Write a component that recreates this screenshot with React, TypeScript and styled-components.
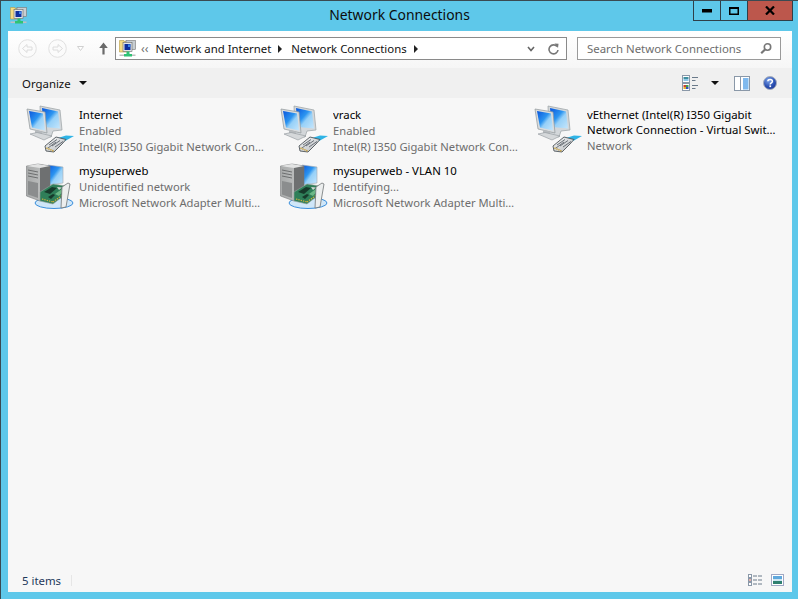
import React from "react";
import styled, { createGlobalStyle } from "styled-components";

const Global = createGlobalStyle`
  html, body { margin: 0; padding: 0; width: 798px; height: 599px; overflow: hidden; }
  #root { width: 798px; height: 599px; }
  * { box-sizing: border-box; }
`;

const Window = styled.div`
  width: 798px; height: 599px; display: flex; flex-direction: column;
  background: #5ec8ea; border-top: 1px solid #3a4a52; border-left: 1px solid #3a4a52;
  font-family: "Noto Sans", "Open Sans", sans-serif; font-size: 11.4px; color: #000;
`;
const TitleBar = styled.div`
  height: 30px; flex: none; display: grid; grid-template-columns: 1fr auto 1fr; align-items: start;
`;
const AppIconSlot = styled.div`
  padding: 6px 0 0 9px; display: flex;
`;
const Title = styled.div`
  font-size: 13.9px; line-height: 20px; padding-top: 4px; color: #0c0c0c;
`;
const Controls = styled.div`
  display: flex; justify-content: flex-end; padding-right: 5px;
`;
const Ctl = styled.div<{ $w: number; $close?: boolean }>`
  width: ${(p) => p.$w}px; height: 20px; display: flex; align-items: center; justify-content: center;
  background: ${(p) => (p.$close ? "#bc574c" : "transparent")};
  border: 1px solid #2f3f48; border-top: none; margin-left: -1px;
`;
const Client = styled.div`
  flex: 1; margin: 0 6px 7px 7px; display: flex; flex-direction: column; background: #f7f7f7;
`;
const NavBar = styled.div`
  height: 37px; flex: none; display: flex; align-items: flex-start; padding: 6px 0 0 10px;
  background: linear-gradient(#ffffff, #f6f6f6);
`;
const NavIcons = styled.div`
  width: 97px; height: 23px; flex: none; display: flex; align-items: center;
`;
const Spacer = styled.span<{ $w: number }>`
  width: ${(p) => p.$w}px; flex: none;
`;
const AddressBox = styled.div`
  width: 452px; height: 23px; flex: none; border: 1px solid #8a8a8a; background: #fff;
  display: flex; align-items: center; color: #111; padding-left: 3px;
`;
const Crumb = styled.span`
  line-height: 20px; white-space: nowrap;
`;
const Chevrons = styled.span`
  color: #6f6f6f; margin: 0 7px 0 5px; font-size: 12px; line-height: 18px;
`;
const Sep = styled.span`
  width: 0; height: 0; border-left: 4px solid #222; border-top: 4px solid transparent; border-bottom: 4px solid transparent;
  margin: 0 9px 0 7px;
`;
const AddrEnd = styled.div`
  margin-left: auto; display: flex; align-items: center; gap: 13px; padding-right: 7px;
`;
const SearchBox = styled.div`
  width: 204px; height: 23px; flex: none; margin-left: 10px; border: 1px solid #9a9a9a; background: #fff;
  display: flex; align-items: center; justify-content: space-between; padding: 0 8px 0 9px; color: #6d6d6d; white-space: nowrap;
`;
const ToolBar = styled.div`
  height: 30px; flex: none; background: #f0f0f0; display: flex; align-items: center; padding: 0 15px 0 14px;
`;
const Organize = styled.span`
  color: #111; line-height: 18px; padding-top: 1px;
`;
const Caret = styled.span<{ $gap: number }>`
  width: 0; height: 0; border-top: 4px solid #111; border-left: 4px solid transparent; border-right: 4px solid transparent;
  margin-left: ${(p) => p.$gap}px;
`;
const ToolRight = styled.div`
  margin-left: auto; display: flex; align-items: center;
`;
const Items = styled.div`
  flex: 1; display: grid; grid-template-columns: repeat(3, 254px); grid-auto-rows: 56px; align-content: start; padding: 5px 0 0 16px;
`;
const Item = styled.div`
  display: flex; min-width: 0;
`;
const IconSlot = styled.div`
  width: 55px; flex: none; padding: 2px 0 0 2px; display: flex;
`;
const ItemText = styled.div<{ $wide?: boolean }>`
  min-width: 0; width: ${(p) => (p.$wide ? 192 : 187)}px; padding-top: 4px; line-height: 16px;
`;
const Name = styled.div<{ $tight?: boolean }>`
  color: #000; line-height: ${(p) => (p.$tight ? "15px" : "16px")};
  overflow: hidden; text-overflow: ellipsis; white-space: nowrap;
`;
const Sub = styled.div<{ $gap?: boolean }>`
  color: #6d6d6d; font-size: 11.2px; overflow: hidden; text-overflow: ellipsis; white-space: nowrap;
  margin-top: ${(p) => (p.$gap ? 1 : 0)}px;
`;
const StatusBar = styled.div`
  height: 24px; flex: none; display: flex; align-items: center; padding: 0 8px 0 14px; color: #1e395b;
`;
const StatusSep = styled.span`
  width: 1px; height: 11px; background: #e6e6e6; margin-left: 10px;
`;
const StatusRight = styled.div`
  margin-left: auto; display: flex; align-items: center; gap: 8px;
`;

const Gradients = () => (
  <svg width="0" height="0" style={{ display: "block" }} aria-hidden>
    <defs>
      <linearGradient id="scr" x1="0" y1="0" x2="1" y2="1">
        <stop offset="0" stopColor="#0a56dc" />
        <stop offset="0.42" stopColor="#2b94f0" />
        <stop offset="0.58" stopColor="#96d0f8" />
        <stop offset="1" stopColor="#c6e6fb" />
      </linearGradient>
      <linearGradient id="tower" x1="0" y1="0" x2="1" y2="0">
        <stop offset="0" stopColor="#a8aaaa" />
        <stop offset="1" stopColor="#c6c8c8" />
      </linearGradient>
      <linearGradient id="body" x1="0" y1="0" x2="1" y2="1">
        <stop offset="0" stopColor="#f7f8f9" />
        <stop offset="1" stopColor="#b4b8bc" />
      </linearGradient>
      <radialGradient id="help" cx="0.4" cy="0.3" r="0.8">
        <stop offset="0" stopColor="#7ea6ea" />
        <stop offset="0.6" stopColor="#2a4fb2" />
        <stop offset="1" stopColor="#1c3690" />
      </radialGradient>
    </defs>
  </svg>
);

const LanIcon = () => (
  <svg width="50" height="50" viewBox="1 0 50 50">
    <path d="M15 1 L35 5 L37 25 L28 26 L26 32 L16 30 Z" fill="#d3d7da" stroke="#9aa0a4" strokeWidth="0.7" />
    <path d="M17 3 L33 6.5 L35 23.5 L19 22 Z" fill="url(#scr)" />
    <path d="M2 4 L20 7 L22 28 L5 24 Z" fill="#d9dcde" stroke="#8f969a" strokeWidth="0.7" />
    <path d="M4 6 L18 8.5 L20 25.5 L7 22.5 Z" fill="url(#scr)" />
    <path d="M10 25 L17 26.5 L17 30 L10 29 Z" fill="#b7bbbe" />
    <path d="M5 29 L12 27.5 L27 31 L19 35 Z" fill="#d5d8da" stroke="#8f969a" strokeWidth="0.6" />
    <path d="M33 33 L41 30.5 L49 31 L41 35.5 L37 37 Z" fill="#2fb4e6" />
    <path d="M20 41 L31 32 L41 34.5 L37 39 L29 47 L21 46 Z" fill="url(#body)" stroke="#4f565a" strokeWidth="0.9" />
    <path d="M24 40 L32 34.5 M27 41 L35 35.5 M30 42 L38 36.5 M23 43 L31 37" stroke="#5d646c" strokeWidth="0.9" />
    <path d="M21.5 43 L28.5 46" stroke="#c49a2a" strokeWidth="1.5" strokeDasharray="1.2 0.9" />
  </svg>
);

const AdapterIcon = () => (
  <svg width="50" height="50" viewBox="0 0 50 50">
    <path d="M22 4 L37 6 L37 22 L22 24 Z" fill="url(#scr)" stroke="#a5aaae" strokeWidth="0.6" />
    <ellipse cx="28" cy="42" rx="19" ry="5.5" fill="#cfe6f8" stroke="#3b8fdc" strokeWidth="1" />
    <path d="M0.5 5 L12 3 L24 5 L24 34 L14 40 L0.5 35 Z" fill="url(#tower)" stroke="#7a7c7d" strokeWidth="0.6" />
    <path d="M12 3 L24 5 L24 34 L14 40 L14 7 Z" fill="#6e7071" />
    <path d="M0.5 5 L12 3 L24 5 L14 7 Z" fill="#e2e3e3" />
    <path d="M2 9 L12 11 M2 12 L12 14 M2 15 L12 17" stroke="#6d6f70" strokeWidth="1" />
    <path d="M2 20 L12 22 L12 37 L2 33.5 Z" fill="#8b8d8e" />
    <path d="M14 31 L27 23 L40 25 L40 33 L27 43 L14 40 Z" fill="#2f7f59" stroke="#98a2a0" strokeWidth="0.6" />
    <path d="M18 31 L26 26 L31 27 L24 33 Z" fill="#173a2b" />
    <path d="M29 33 L36 28 L38 29 L33 35 Z" fill="#6cb886" />
    <path d="M22 36 L27 33 L29 34 L25 38 Z" fill="#173a2b" />
    <path d="M31 26 L36 26.5 L33 29 Z" fill="#cfd6d2" />
    <path d="M16 38 L27 41 M27 41 L38 33" stroke="#d0b040" strokeWidth="1.2" strokeDasharray="1.4 1" />
    <path d="M36 26 L42 22 L44 23 L40 46 L35 47 Z" fill="#eceeee" stroke="#6e7375" strokeWidth="0.8" />
  </svg>
);

const FolderNetIcon = () => (
  <svg width="17" height="17" viewBox="0 0 17 17">
    <path d="M0.5 0.5 H5 V1.5 H9 V12 H0.5 Z" fill="#f6dc83" stroke="#b79a45" strokeWidth="0.6" />
    <rect x="7" y="0.5" width="9.5" height="9" fill="#c8ced2" stroke="#777" strokeWidth="0.6" />
    <rect x="4" y="2.5" width="9" height="9" fill="#e3e6e8" stroke="#666" strokeWidth="0.6" />
    <rect x="5.5" y="4" width="6" height="6" fill="#0f2f9e" />
    <rect x="9" y="4.5" width="2.5" height="2.5" fill="#3f87e8" />
    <rect x="7.5" y="11.5" width="3" height="3" fill="#2fc274" />
    <rect x="5" y="14" width="8" height="2.5" fill="#2fc274" />
    <rect x="0.5" y="14.5" width="4.5" height="1.5" fill="#bfbfbf" />
    <rect x="13" y="14.5" width="3.5" height="1.5" fill="#bfbfbf" />
  </svg>
);

const RoundArrow = ({ dir }: { dir: "l" | "r" }) => (
  <svg width="19" height="19" viewBox="0 0 19 19">
    <circle cx="9.5" cy="9.5" r="8.8" fill="#fbfbfb" stroke="#e0e0e0" strokeWidth="1" />
    <path
      d={dir === "l" ? "M4.5 9.5 L9 5.5 V8 H14 V11 H9 V13.5 Z" : "M14.5 9.5 L10 5.5 V8 H5 V11 H10 V13.5 Z"}
      fill="#fbfbfb"
      stroke="#dcdcdc"
      strokeWidth="1"
    />
  </svg>
);

type Entry = { k: string; lines: string[]; sub: string; dev?: string };
const items: Entry[] = [
  { k: "lan", lines: ["Internet"], sub: "Enabled", dev: "Intel(R) I350 Gigabit Network Connection" },
  { k: "lan", lines: ["vrack"], sub: "Enabled", dev: "Intel(R) I350 Gigabit Network Connection" },
  { k: "lan", lines: ["vEthernet (Intel(R) I350 Gigabit", "Network Connection - Virtual Switch)"], sub: "Network" },
  { k: "adp", lines: ["mysuperweb"], sub: "Unidentified network", dev: "Microsoft Network Adapter Multiplexor" },
  { k: "adp", lines: ["mysuperweb - VLAN 10"], sub: "Identifying...", dev: "Microsoft Network Adapter Multiplexor" },
];

export default function App() {
  return (
    <Window>
      <Global />
      <Gradients />
      <TitleBar>
        <AppIconSlot>
          <FolderNetIcon />
        </AppIconSlot>
        <Title>Network Connections</Title>
        <Controls>
          <Ctl $w={28}>
            <svg width="10" height="4" viewBox="0 0 10 4"><rect y="0" width="10" height="3.5" fill="#000" /></svg>
          </Ctl>
          <Ctl $w={28}>
            <svg width="10" height="8" viewBox="0 0 10 8"><path d="M0.75 1 H9.25 V7.25 H0.75 Z" fill="none" stroke="#000" strokeWidth="1.5" /><rect width="10" height="2" fill="#000" /></svg>
          </Ctl>
          <Ctl $w={46} $close>
            <svg width="10" height="9" viewBox="0 0 10 9"><path d="M1 0.5 L9 8.5 M9 0.5 L1 8.5" stroke="#000" strokeWidth="2.2" /></svg>
          </Ctl>
        </Controls>
      </TitleBar>
      <Client>
        <NavBar>
          <NavIcons>
            <RoundArrow dir="l" />
            <Spacer $w={11} />
            <RoundArrow dir="r" />
            <Spacer $w={10} />
            <svg width="7" height="5" viewBox="0 0 7 5"><path d="M0.5 0.5 H6.5 L3.5 4.5 Z" fill="#fff" stroke="#d0d0d0" /></svg>
            <Spacer $w={15} />
            <svg width="9" height="13" viewBox="0 0 9 13"><path d="M4.5 0.5 L8.8 6 H5.6 V12.5 H3.4 V6 H0.2 Z" fill="#6a6a6a" /></svg>
          </NavIcons>
          <AddressBox>
            <FolderNetIcon />
            <Chevrons>‹‹</Chevrons>
            <Crumb>Network and Internet</Crumb>
            <Sep />
            <Crumb>Network Connections</Crumb>
            <Sep />
            <AddrEnd>
              <svg width="8" height="6" viewBox="0 0 8 6"><path d="M1 1 L4 4.5 L7 1" fill="none" stroke="#666" strokeWidth="1.6" /></svg>
              <svg width="11" height="12" viewBox="0 0 11 12"><path d="M9 3.5 A4.5 4.5 0 1 0 10 7" fill="none" stroke="#777" strokeWidth="1.6" /><path d="M6.5 0.5 L10.5 0.8 L10 5 Z" fill="#777" /></svg>
            </AddrEnd>
          </AddressBox>
          <SearchBox>
            <span>Search Network Connections</span>
            <svg width="12" height="11" viewBox="0 0 12 11"><circle cx="7.5" cy="4" r="3.2" fill="#fff" stroke="#777" strokeWidth="1.6" /><path d="M5 6.5 L1.2 10.2" stroke="#777" strokeWidth="2.2" /></svg>
          </SearchBox>
        </NavBar>
        <ToolBar>
          <Organize>Organize</Organize>
          <Caret $gap={8} />
          <ToolRight>
            <svg width="16" height="16" viewBox="0 0 16 16">
              <rect x="0.5" y="0.5" width="7" height="7" fill="#fff" stroke="#8a98a8" />
              <rect x="1.5" y="2" width="5" height="2" fill="#3f8f9f" />
              <rect x="1.5" y="4" width="5" height="2" fill="#8fc7e8" />
              <rect x="0.5" y="8.5" width="7" height="7" fill="#fff" stroke="#8a98a8" />
              <rect x="1.5" y="10" width="2.5" height="2" fill="#d04030" />
              <rect x="4" y="10" width="2.5" height="2" fill="#3a9f50" />
              <rect x="1.5" y="12" width="2.5" height="2" fill="#e0b030" />
              <rect x="4" y="12" width="2.5" height="2" fill="#3050c0" />
              <path d="M10 2.5 H16 M10 5.5 H13.5 M10 10.5 H16 M10 13.5 H13.5" stroke="#6a7a8a" strokeWidth="1" />
            </svg>
            <Caret $gap={13} />
            <svg width="16" height="15" viewBox="0 0 16 15" style={{ marginLeft: 15 }}>
              <rect x="0.5" y="0.5" width="15" height="14" fill="#fff" stroke="#8a98a8" />
              <path d="M6.5 0.5 V14.5" stroke="#8a98a8" />
              <rect x="9" y="2" width="5.5" height="11.5" fill="#7fb9ee" />
            </svg>
            <svg width="14" height="14" viewBox="0 0 14 14" style={{ marginLeft: 13 }}>
              <circle cx="7" cy="7" r="6.5" fill="url(#help)" stroke="#a6aebc" />
              <path d="M4.8 5.2 C5 2.8 9.4 2.8 9.4 5.2 C9.4 6.8 7.2 6.8 7.2 8.5" fill="none" stroke="#fff" strokeWidth="1.5" />
              <rect x="6.4" y="9.4" width="1.7" height="1.7" fill="#fff" />
            </svg>
          </ToolRight>
        </ToolBar>
        <Items>
          {items.map((it) => (
            <Item key={it.lines[0]}>
              <IconSlot>{it.k === "lan" ? <LanIcon /> : <AdapterIcon />}</IconSlot>
              <ItemText $wide={it.lines.length > 1}>
                {it.lines.map((l) => (
                  <Name key={l} $tight={it.lines.length > 1}>{l}</Name>
                ))}
                <Sub $gap={it.lines.length > 1}>{it.sub}</Sub>
                {it.dev && <Sub>{it.dev}</Sub>}
              </ItemText>
            </Item>
          ))}
        </Items>
        <StatusBar>
          <span>5 items</span>
          <StatusSep />
          <StatusRight>
            <svg width="15" height="12" viewBox="0 0 15 12">
              <rect x="0.5" y="0.5" width="3" height="3" fill="#fff" stroke="#8a98a8" />
              <rect x="0.5" y="4.5" width="3" height="3" fill="#e8b0a8" stroke="#8a98a8" />
              <rect x="0.5" y="8.5" width="3" height="3" fill="#fff" stroke="#8a98a8" />
              <path d="M5 2 H15 M5 6 H15 M5 10 H15" stroke="#6a7a8a" strokeDasharray="4 1" />
            </svg>
            <svg width="13" height="12" viewBox="0 0 13 12">
              <rect x="0.5" y="0.5" width="12" height="11" fill="#fff" stroke="#a0a8c4" />
              <rect x="2" y="2" width="9" height="3" fill="#5fa8dc" />
              <rect x="2" y="5" width="9" height="2" fill="#cfe6f2" />
              <rect x="2" y="7" width="9" height="3" fill="#2f8070" />
            </svg>
          </StatusRight>
        </StatusBar>
      </Client>
    </Window>
  );
}
